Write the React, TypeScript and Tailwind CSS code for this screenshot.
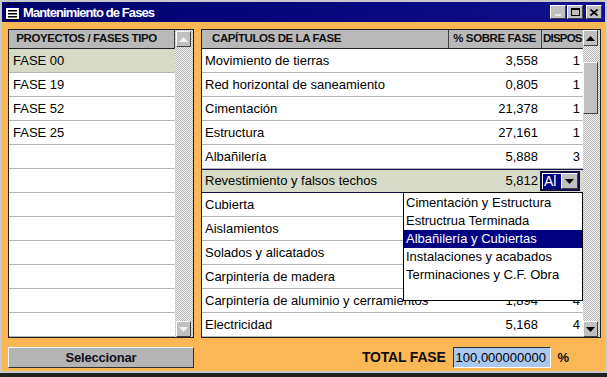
import React from "react";

const rows = [
  { name: "Movimiento de tierras", pct: "3,558", disp: "1" },
  { name: "Red horizontal de saneamiento", pct: "0,805", disp: "1" },
  { name: "Cimentación", pct: "21,378", disp: "1" },
  { name: "Estructura", pct: "27,161", disp: "1" },
  { name: "Albañilería", pct: "5,888", disp: "3" },
  { name: "Revestimiento y falsos techos", pct: "5,812", disp: "", selected: true },
  { name: "Cubierta", pct: "", disp: "" },
  { name: "Aislamientos", pct: "", disp: "" },
  { name: "Solados y alicatados", pct: "", disp: "" },
  { name: "Carpintería de madera", pct: "", disp: "" },
  { name: "Carpintería de aluminio y cerramientos", pct: "1,894", disp: "4" },
  { name: "Electricidad", pct: "5,168", disp: "4" },
];

const fases = ["FASE 00", "FASE 19", "FASE 52", "FASE 25", "", "", "", "", "", "", "", ""];

const options = [
  "Cimentación y Estructura",
  "Estructrua Terminada",
  "Albañilería y Cubiertas",
  "Instalaciones y acabados",
  "Terminaciones y C.F. Obra",
];

const Arrow = ({ up, dim }: { up?: boolean; dim?: boolean }) => (
  <svg width="9" height="5" viewBox="0 0 9 5">
    <polygon
      points={up ? "4.5,0 9,5 0,5" : "0,0 9,0 4.5,5"}
      fill={dim ? "#f4f4f4" : "#000"}
    />
  </svg>
);

const ScrollBtn = ({ up, dim }: { up?: boolean; dim?: boolean }) => (
  <div className="w-[15px] h-[16px] bg-[#c0c0c0] border border-t-white border-l-white border-r-[#404040] border-b-[#404040] flex items-center justify-center">
    <Arrow up={up} dim={dim} />
  </div>
);

const track =
  "bg-[repeating-conic-gradient(#b8b8b8_0_25%,#f0f0f0_0_50%)] bg-[length:2px_2px]";

export default function App() {
  return (
    <div
      className="w-[607px] h-[377px] bg-[#c8c8c8] p-[2px] flex flex-col border-b-[4px] border-b-[#202020]"
      style={{ fontFamily: '"Liberation Sans", Arial, sans-serif' }}
    >
      {/* title bar */}
      <div className="h-[20px] bg-gradient-to-r from-[#00006e] to-[#10108c] flex items-center pl-[3px] pr-[3px] shrink-0">
        <svg width="15" height="16" viewBox="0 0 15 16">
          <rect x="0.5" y="0.5" width="14" height="15" fill="#fff" stroke="#000" />
          <rect x="1" y="1" width="13" height="3" fill="#000080" />
          <rect x="3" y="6" width="9" height="1.5" fill="#000" />
          <rect x="3" y="9" width="9" height="1.5" fill="#000" />
          <rect x="3" y="12" width="9" height="1.5" fill="#000" />
        </svg>
        <span className="ml-[3px] text-white font-bold text-[13px] tracking-[-0.9px] leading-none">
          Mantenimiento de Fases
        </span>
        <div className="ml-auto flex items-center gap-[1px]">
          <div className="w-[16px] h-[14px] bg-[#c0c0c0] border border-t-white border-l-white border-r-[#404040] border-b-[#404040] flex items-end justify-center pb-[2px]">
            <div className="w-[6px] h-[2px] bg-[#e8e8e8]" />
          </div>
          <div className="w-[16px] h-[14px] bg-[#c0c0c0] border border-t-white border-l-white border-r-[#404040] border-b-[#404040] flex items-center justify-center">
            <div className="w-[9px] h-[8px] border border-black border-t-2" />
          </div>
          <div className="w-[16px] h-[14px] bg-[#c0c0c0] border border-t-white border-l-white border-r-[#404040] border-b-[#404040] flex items-center justify-center ml-[2px]">
            <svg width="8" height="7" viewBox="0 0 8 7">
              <path d="M0.5 0.5 L7.5 6.5 M7.5 0.5 L0.5 6.5" stroke="#000" strokeWidth="1.6" />
            </svg>
          </div>
        </div>
      </div>

      {/* body */}
      <div className="flex-1 bg-[#fbb656] pt-[7px] pl-[6px] pr-[4px] flex flex-col">
        <div className="flex gap-[7px]">
          {/* left panel */}
          <div className="w-[186px] h-[309px] border border-[#202020] bg-white flex">
            <div className="w-[166px] flex flex-col">
              <div className="h-[19px] bg-[#b9b9b9] border-b border-b-[#202020] border-r border-r-[#404040] flex items-center justify-center pr-[10px] text-[11.5px] font-bold tracking-[-0.4px] text-[#101010]">
                PROYECTOS / FASES TIPO
              </div>
              {fases.map((f, i) => (
                <div
                  key={i}
                  className={`h-[24px] border-b border-[#b4b4b4] flex items-center pl-[4px] text-[13px] text-black ${
                    i === 0 ? "bg-[#d6dac6]" : ""
                  }`}
                >
                  {f}
                </div>
              ))}
            </div>
            <div className={`w-[18px] flex flex-col justify-between pl-[1px] pt-[1px] ${track}`}>
              <ScrollBtn up dim />
              <ScrollBtn dim />
            </div>
          </div>

          {/* right panel */}
          <div className="w-[400px] h-[309px] border border-[#202020] bg-white flex relative">
            <div className="w-[381px] flex flex-col">
              <div className="h-[19px] bg-[#b9b9b9] border-b border-b-[#202020] grid grid-cols-[247px_93px_41px] text-[11.5px] font-bold tracking-[-0.4px] text-[#101010]">
                <div className="flex items-center pl-[10px] border-r border-[#404040]">
                  CAPÍTULOS DE LA FASE
                </div>
                <div className="flex items-center justify-end pr-[5px] border-r border-[#404040]">
                  % SOBRE FASE
                </div>
                <div className="flex items-center pl-[1px] whitespace-nowrap tracking-[-0.8px]">
                  DISPOS
                </div>
              </div>
              {rows.map((r, i) => (
                <div
                  key={i}
                  className={`h-[24px] grid grid-cols-[247px_93px_41px] text-[13px] text-black ${
                    r.selected
                      ? "bg-[#d6dac6] border-y border-[#10104a]"
                      : "border-b border-[#b4b4b4]"
                  }`}
                >
                  <div className="flex items-center pl-[3px] whitespace-nowrap overflow-visible">
                    {r.name}
                  </div>
                  <div className="flex items-center justify-end pr-[4px]">{r.pct}</div>
                  <div className="flex items-center justify-end pr-[3px]">
                    {r.selected ? (
                      <div className="w-[40px] h-[20px] border-2 border-[#10104a] bg-white flex items-center ml-[2px]">
                        <div className="h-[15px] bg-[#000080] text-white text-[14px] flex items-center pl-[1px] w-[18px] ml-[1px]">
                          Al
                        </div>
                        <div className="ml-auto w-[17px] h-[16px] bg-[#c0c0c0] border border-t-white border-l-white border-r-[#404040] border-b-[#404040] flex items-center justify-center">
                          <Arrow />
                        </div>
                      </div>
                    ) : (
                      r.disp
                    )}
                  </div>
                </div>
              ))}
            </div>
            <div className={`w-[17px] flex flex-col ${track}`}>
              <ScrollBtn up />
              <div className="mt-[16px] w-[15px] h-[52px] bg-[#c0c0c0] border border-t-white border-l-white border-r-[#404040] border-b-[#404040]" />
              <div className="mt-auto">
                <ScrollBtn />
              </div>
            </div>

            {/* dropdown list */}
            <div className="absolute left-[201px] top-[162px] w-[180px] h-[109px] bg-white border border-black pt-[1px] text-[13px] text-black">
              {options.map((o, i) => (
                <div
                  key={i}
                  className={`h-[18px] flex items-center pl-[2px] whitespace-nowrap ${
                    i === 2 ? "bg-[#000080] text-white" : ""
                  }`}
                >
                  {o}
                </div>
              ))}
            </div>
          </div>
        </div>

        {/* bottom row */}
        <div className="flex items-center mt-[9px]">
          <button className="w-[186px] h-[21px] bg-[#b4b4b4] border border-t-white border-l-white border-r-[#303030] border-b-[#303030] text-[13px] font-bold text-[#101020] tracking-[-0.2px]">
            Seleccionar
          </button>
          <span className="ml-[168px] text-[14px] font-bold text-[#101010] tracking-[-0.2px]">
            TOTAL FASE
          </span>
          <div className="ml-[7px] w-[98px] h-[21px] bg-[#a8c8f0] border border-t-[#303030] border-l-[#303030] border-r-white border-b-white flex items-center pl-[2px] text-[13px] text-black">
            100,000000000
          </div>
          <span className="ml-[7px] text-[13px] font-bold text-[#101010]">%</span>
        </div>
      </div>
    </div>
  );
}
